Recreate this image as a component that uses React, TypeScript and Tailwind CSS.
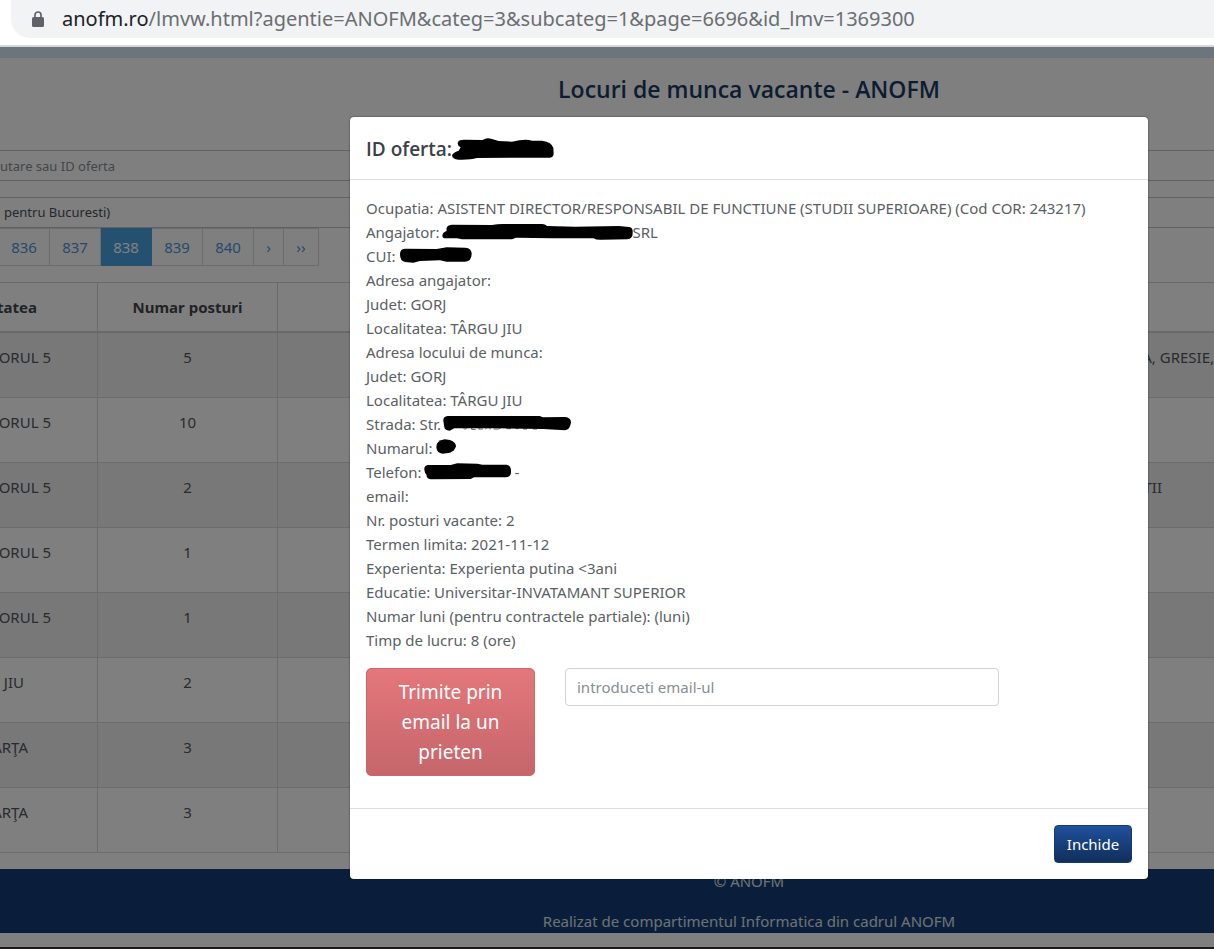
import React from "react";

const rows = [
  { place: "ORUL 5", placeWidth: "w-[51px]", count: 5, details: "A, GRESIE,", detailsPad: "pr-0" },
  { place: "ORUL 5", placeWidth: "w-[51px]", count: 10 },
  { place: "ORUL 5", placeWidth: "w-[51px]", count: 2, details: "TII", detailsPad: "pr-[52px]" },
  { place: "ORUL 5", placeWidth: "w-[51px]", count: 1 },
  { place: "ORUL 5", placeWidth: "w-[51px]", count: 1 },
  { place: "JIU", placeWidth: "w-6", count: 2 },
  { place: "ARŢA", placeWidth: "w-7", count: 3 },
  { place: "ARŢA", placeWidth: "w-7", count: 3 },
];

const pages = [
  { label: "836", width: "w-[51px]" },
  { label: "837", width: "w-[51px]" },
  { label: "838", width: "w-[51px]", active: true },
  { label: "839", width: "w-[51px]" },
  { label: "840", width: "w-[51px]" },
  { label: "›", width: "w-[30px]" },
  { label: "››", width: "w-[35px]" },
];

// Marker strokes, drawn at three units per pixel
const strokes = {
  id: "M0 52Q2 44 20 38L26 28Q14 22 18 12Q22 4 40 5L92 6Q104 -3 120 3L140 9L180 11Q220 2 240 8L270 8Q300 12 304 30L305 48Q304 59 292 59L74 60Q56 66 20 65Q0 64 0 52Z",
  employer:
    "M1 38Q2 28 14 24Q10 6 30 5L150 6Q170 2 190 3L300 3Q312 4 314 9L400 11L530 9L560 12Q573 12 572 28Q573 48 556 49L480 50Q465 52 455 46L330 46L222 44L210 49L60 49L45 46L12 46Q1 46 1 38Z",
  cui: "M0 22Q0 6 14 5L110 6L140 1L196 2Q216 4 215 22Q214 44 196 44L140 44L120 40L60 42L40 47L16 45Q0 44 0 22Z",
  street:
    "M1 18Q0 4 14 3L290 3L300 7L366 6Q384 8 384 22Q382 44 366 46L300 42L170 40L34 40L20 47Q4 46 4 36Z",
  number: "M1 24Q0 6 26 1L42 3Q60 10 60 22Q56 36 42 41L20 44Q2 42 1 24Z",
  phone:
    "M1 20Q0 6 14 6L80 6L100 1L160 2L175 5L248 5Q262 8 261 24Q262 42 246 43L150 43L140 48L20 49Q6 46 8 36Q2 30 1 20Z",
};

function Marker({ d, className, viewBox }: { d: string; className: string; viewBox: string }) {
  return (
    <svg className={`shrink-0 ${className}`} viewBox={viewBox} aria-hidden="true">
      <path d={d} fill="#000" />
    </svg>
  );
}

function AddressBar() {
  return (
    <header className="bg-white border-b-2 border-[#d5d8dc] pb-[7px] pl-[11px]">
      <div className="flex items-center h-[38px] rounded-bl-[19px] bg-[#f1f3f4] pl-5">
        <svg className="w-[14px] h-[18px] shrink-0" viewBox="0 0 14 18" aria-hidden="true">
          <rect x="1" y="7" width="12" height="10" rx="1.5" fill="#5f6368" />
          <path d="M4 7.5V5a3 3 0 0 1 6 0v2.5" fill="none" stroke="#5f6368" strokeWidth="1.7" />
        </svg>
        <p className="pl-[17px] text-[20px] whitespace-nowrap text-[#6b6e72]">
          <span className="text-[#202124]">anofm.ro</span>
          /lmvw.html?agentie=ANOFM&amp;categ=3&amp;subcateg=1&amp;page=6696&amp;id_lmv=1369300
        </p>
      </div>
    </header>
  );
}

function Listing() {
  return (
    <div>
      <div className="h-[11px] bg-[#d9eaf6]" />
      <h1 className="pt-[13px] h-[92px] pl-[284px] text-center font-['Open_Sans',sans-serif] text-[23px] leading-9 font-semibold text-[#1b3a63]">
        Locuri de munca vacante - ANOFM
      </h1>
      <input
        type="text"
        aria-label="Cautare"
        placeholder="utare sau ID oferta"
        className="block w-full h-[31px] border-y border-[#bfc4c9] text-[13px] placeholder:text-[#868e96]"
      />
      <select
        aria-label="Judet"
        className="block w-full h-[31px] mt-4 pt-px pl-1 border-y border-[#bfc4c9] appearance-none text-[13px] text-[#495057]"
      >
        <option>pentru Bucuresti)</option>
      </select>
      <nav className="flex h-[38px] text-[15px] -ml-px">
        {pages.map((p) => (
          <a
            key={p.label}
            href="#"
            className={`flex items-center justify-center border-r border-y ${p.width} ${
              p.active
                ? "bg-[#4ba3e3] border-[#4ba3e3] text-white"
                : "border-[#d5d9dd] text-[#4f94d4]"
            }`}
          >
            {p.label}
          </a>
        ))}
      </nav>
      <table className="w-full mt-4 mb-4 table-fixed border-separate border-spacing-0 text-[15px] leading-6 text-[#53575c]">
        <thead>
          <tr className="h-[51px] text-[#43474c]">
            <th className="w-[98px] border-t border-b-2 border-r border-[#d0d3d6] p-0">
              <span className="flex w-[37px] justify-end">tatea</span>
            </th>
            <th className="w-[180px] border-t border-b-2 border-r border-[#d0d3d6] p-0">
              Numar posturi
            </th>
            <th className="border-t border-b-2 border-[#d0d3d6] p-0"></th>
          </tr>
        </thead>
        <tbody>
          {rows.map((row, i) => (
            <tr key={i} className="h-[65px] align-top odd:bg-[#f0f0f0]">
              <td className="border-b border-r border-[#d6d9dc] p-0 pt-3">
                <span className={`flex justify-end overflow-hidden whitespace-nowrap ${row.placeWidth}`}>
                  {row.place}
                </span>
              </td>
              <td className="border-b border-r border-[#d6d9dc] p-0 pt-3 text-center">
                {row.count}
              </td>
              <td className={`border-b border-[#d6d9dc] p-0 pt-3 text-right ${row.detailsPad ?? ""}`}>
                {row.details}
              </td>
            </tr>
          ))}
        </tbody>
      </table>
      <footer className="bg-[#143d76] pl-[284px] text-center text-[15px] leading-6 text-[#dfe3e8]">
        <p className="pb-4">© ANOFM</p>
        <p>Realizat de compartimentul Informatica din cadrul ANOFM</p>
      </footer>
      <div className="h-4 border-b-2 border-[#3c3438]" />
    </div>
  );
}

function OfferDialog() {
  return (
    <div
      role="dialog"
      aria-labelledby="offer-title"
      className="rounded-[4px] bg-white shadow-[0_0_2px_rgba(0,0,0,0.6)] text-[15px] leading-6 text-[#5a5f64]"
    >
      <div className="flex h-[63px] items-center border-b border-[#dcdfe2] px-4 pt-0.5">
        <h2
          id="offer-title"
          className="font-['Open_Sans',sans-serif] text-[19px] font-semibold text-[#3d4145]"
        >
          ID oferta:
        </h2>
        <Marker d={strokes.id} viewBox="0 0 306 66" className="w-[102px] h-[22px]" />
      </div>
      <div className="p-4 pb-8">
        <p>Ocupatia: ASISTENT DIRECTOR/RESPONSABIL DE FUNCTIUNE (STUDII SUPERIOARE) (Cod COR: 243217)</p>
        <p className="flex">
          Angajator:
          <Marker d={strokes.employer} viewBox="0 0 573 51" className="mt-[3px] ml-0.5 w-[191px] h-[17px]" />
          SRL
        </p>
        <p className="flex">
          CUI:
          <Marker d={strokes.cui} viewBox="0 0 216 48" className="mt-[3px] ml-1 w-[72px] h-4" />
        </p>
        <p>Adresa angajator:</p>
        <p>Judet: GORJ</p>
        <p>Localitatea: TÂRGU JIU</p>
        <p>Adresa locului de munca:</p>
        <p>Judet: GORJ</p>
        <p>Localitatea: TÂRGU JIU</p>
        <p className="flex">
          Strada: Str.
          <svg className="mt-[3px] ml-0.5 w-32 h-[17px] shrink-0" viewBox="0 0 384 51" aria-hidden="true">
            <path
              d="M58 36L66 43L74 36M86 36V43H98M108 43V36M108 42H120M128 43L132 36M142 43L139 36M152 42H166L174 38M190 41H204M218 41H226M240 42H252M270 42H282"
              fill="none"
              stroke="#5a5f64"
              strokeWidth="3"
            />
            <path d={strokes.street} fill="#000" />
          </svg>
        </p>
        <p className="flex">
          Numarul:
          <Marker d={strokes.number} viewBox="0 0 60 45" className="mt-[3px] ml-1 w-5 h-[15px]" />
        </p>
        <p className="flex">
          Telefon:
          <Marker d={strokes.phone} viewBox="0 0 261 51" className="mt-[3px] mr-1 ml-0.5 w-[87px] h-[17px]" />-
        </p>
        <p>email:</p>
        <p>Nr. posturi vacante: 2</p>
        <p>Termen limita: 2021-11-12</p>
        <p>Experienta: Experienta putina &lt;3ani</p>
        <p>Educatie: Universitar-INVATAMANT SUPERIOR</p>
        <p>Numar luni (pentru contractele partiale): (luni)</p>
        <p>Timp de lucru: 8 (ore)</p>
        <div className="flex items-start gap-[30px] pt-4">
          <button
            type="button"
            className="w-[169px] rounded-[5px] border border-[#d0666b] bg-linear-to-b from-[#e4777b] to-[#c5666b] px-4 pt-2 pb-2 text-[19px] leading-[30px] text-white"
          >
            Trimite prin email la un prieten
          </button>
          <input
            type="email"
            aria-label="introduceti email-ul"
            placeholder="introduceti email-ul"
            className="h-[38px] w-[434px] min-w-0 rounded-[4px] border border-[#ced4da] px-[11px] placeholder:text-[#868e96]"
          />
        </div>
      </div>
      <div className="flex justify-end border-t border-[#dcdfe2] p-4">
        <button
          type="button"
          className="h-[38px] w-[78px] rounded-[4px] border border-[#143a72] bg-linear-to-b from-[#1f519c] to-[#102f5c] text-[15px] text-white"
        >
          Inchide
        </button>
      </div>
    </div>
  );
}

export default function App() {
  return (
    <div className="overflow-hidden bg-white font-['Noto_Sans','Open_Sans',sans-serif]">
      <AddressBar />
      <main className="relative">
        <Listing />
        <div className="absolute inset-0 bg-black/50 pt-[70px] pr-[66px] pl-[350px]">
          <OfferDialog />
        </div>
      </main>
    </div>
  );
}
